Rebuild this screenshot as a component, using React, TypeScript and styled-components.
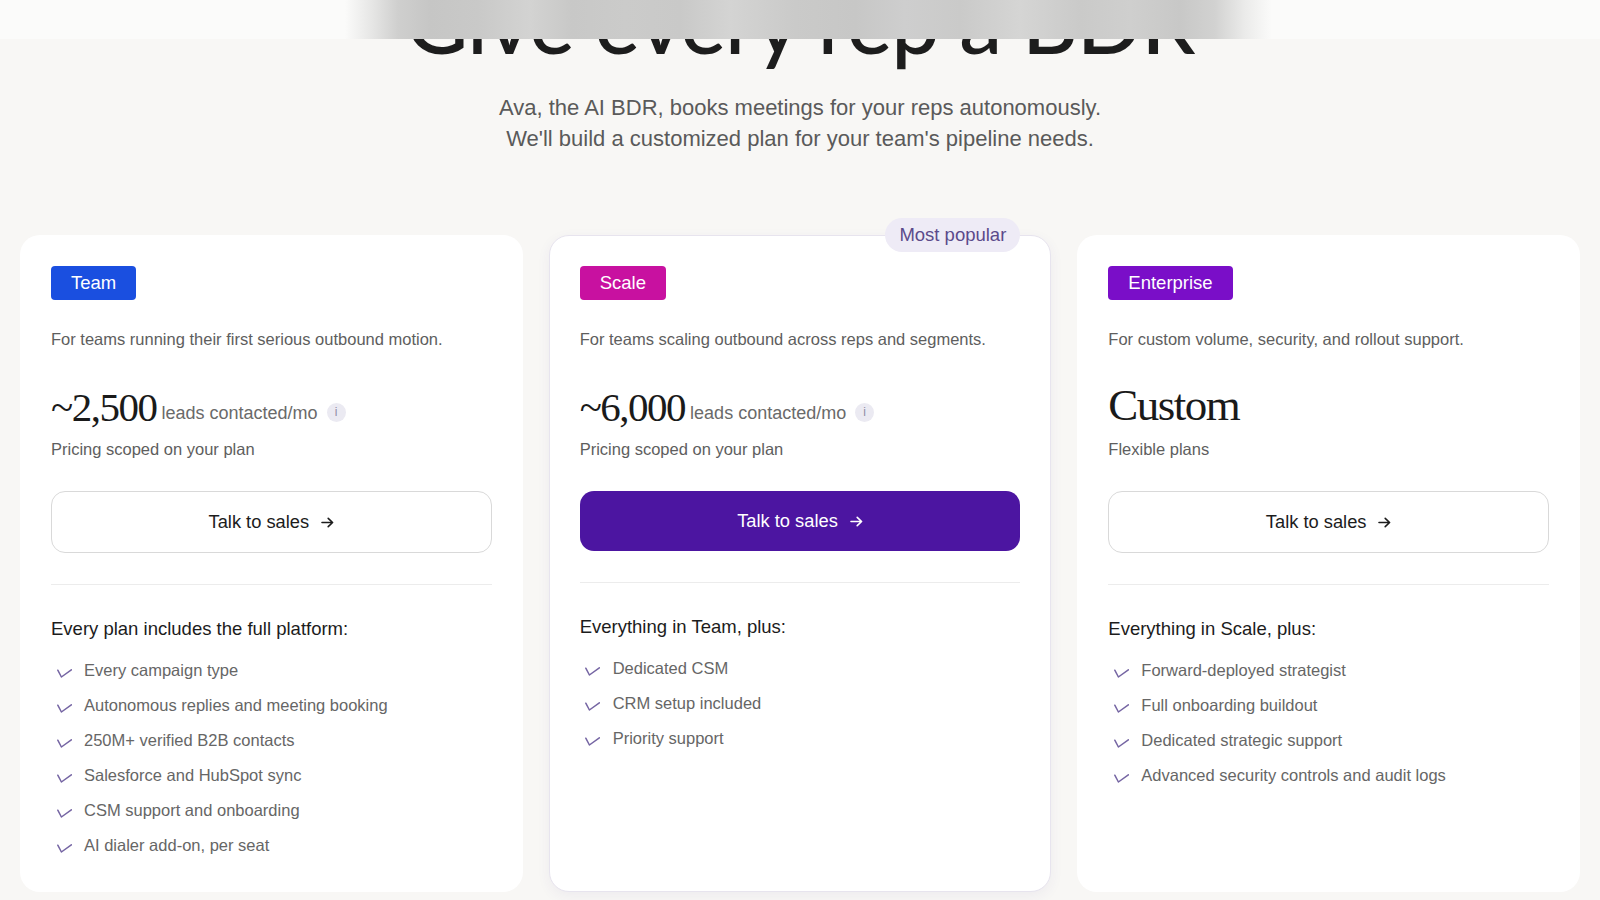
import React from "react";
import styled, { createGlobalStyle, css } from "styled-components";

const GlobalStyle = createGlobalStyle`
  * { box-sizing: border-box; }
  html, body { margin: 0; padding: 0; background: #f8f7f5; }
  body {
    font-family: "Liberation Sans", Arial, Helvetica, sans-serif;
    color: #1c1c1c;
    -webkit-font-smoothing: antialiased;
  }
`;

/* Frosted top bar lying over the scrolled-up headline: the blurred glyph
   mass is painted as a soft horizontal gradient band. */
const TopBar = styled.header`
  position: fixed;
  top: 0;
  left: 0;
  right: 0;
  height: 39px;
  z-index: 10;
  background: linear-gradient(
    90deg,
    #fbfbfa 0px,
    #fbfbfa 345px,
    #e6e6e5 372px,
    #cfcfce 398px,
    #c6c6c5 430px,
    #c9c9c8 478px,
    #d3d3d2 530px,
    #c8c8c7 572px,
    #cbcbca 625px,
    #c9c9c8 680px,
    #d4d4d3 730px,
    #cacac9 795px,
    #c7c7c6 855px,
    #cecece 905px,
    #cacac9 960px,
    #d5d5d4 1020px,
    #cacac9 1080px,
    #cfcfce 1130px,
    #c8c8c7 1180px,
    #d2d2d1 1215px,
    #ebebea 1245px,
    #fbfbfa 1272px,
    #fbfbfa 1600px
  );
`;

const Page = styled.main`
  padding: 0 20px 40px;
`;

const Hero = styled.section`
  text-align: center;
`;

const Title = styled.h1`
  margin: -22px 0 0;
  font-family: Lato, "Open Sans", sans-serif;
  font-weight: 500;
  font-size: 86px;
  line-height: 86px;
  letter-spacing: -1px;
  color: #1d1d1d;
`;

const Subtitle = styled.p`
  margin: 27.5px 0 0;
  font-size: 22px;
  line-height: 31px;
  color: #5a5a5a;
`;

const Grid = styled.div`
  margin-top: 81px;
  display: grid;
  grid-template-columns: repeat(3, 1fr);
  gap: 26px;
  align-items: stretch;
`;

const Card = styled.article<{ $featured?: boolean }>`
  position: relative;
  background: #ffffff;
  border-radius: 20px;
  padding: 31px 31px 35px;
  display: flex;
  flex-direction: column;
  ${(p) =>
    p.$featured &&
    css`
      border: 1px solid #e7e4ee;
      padding: 30px 30px 34px;
      box-shadow: 0 4px 14px rgba(70, 50, 130, 0.06);
    `}
`;

const PopularPill = styled.span`
  position: absolute;
  top: -18px;
  right: 30px;
  height: 34px;
  padding: 0 14px;
  display: inline-flex;
  align-items: center;
  border-radius: 17px;
  background: #eeebf6;
  color: #5b4a8b;
  font-size: 18.5px;
`;

const Badge = styled.span<{ $color: string }>`
  align-self: flex-start;
  display: inline-flex;
  align-items: center;
  height: 34px;
  padding: 0 20px;
  border-radius: 4px;
  background: ${(p) => p.$color};
  color: #ffffff;
  font-size: 18.5px;
`;

const Description = styled.p`
  margin: 27px 0 0;
  font-size: 16.5px;
  line-height: 24px;
  color: #5e5e5e;
`;

const PriceRow = styled.div`
  margin-top: 34.5px;
  height: 44px;
  display: flex;
  align-items: baseline;
`;

const BigNumber = styled.span<{ $custom?: boolean }>`
  font-family: "Liberation Serif", "Times New Roman", serif;
  font-size: ${(p) => (p.$custom ? "45px" : "41px")};
  line-height: ${(p) => (p.$custom ? "41px" : "44px")};
  letter-spacing: -1.5px;
  color: #1a1a1a;
`;

const Unit = styled.span`
  margin-left: 5px;
  font-size: 18px;
  color: #6a6a6a;
  transform: translateY(-2px);
`;

const InfoDot = styled.span`
  margin-left: 9px;
  width: 19px;
  height: 19px;
  border-radius: 50%;
  background: #ebeaf2;
  color: #8f8ca4;
  font-size: 12px;
  line-height: 19px;
  text-align: center;
  display: inline-block;
  transform: translateY(-5px);
`;

const Note = styled.p`
  margin: 8px 0 0;
  font-size: 16.5px;
  line-height: 24px;
  color: #5e5e5e;
`;

const SalesButton = styled.button<{ $primary?: boolean }>`
  margin-top: 30px;
  width: 100%;
  height: 62px;
  border-radius: 14px;
  border: 1.5px solid #d9d9d9;
  background: #ffffff;
  color: #1c1c1c;
  font-family: inherit;
  font-size: 18.3px;
  display: flex;
  align-items: center;
  justify-content: center;
  gap: 12px;
  cursor: pointer;
  ${(p) =>
    p.$primary &&
    css`
      height: 60px;
      border: none;
      background: #4c15a1;
      color: #ffffff;
    `}
`;

const Divider = styled.hr`
  margin: 31px 0 0;
  border: none;
  height: 1px;
  background: #ececec;
`;

const FeatureTitle = styled.h3`
  margin: 31px 0 0;
  font-weight: 400;
  font-size: 18.5px;
  line-height: 26px;
  color: #1c1c1c;
`;

const FeatureList = styled.ul`
  list-style: none;
  margin: 16px 0 0;
  padding: 0;
  display: flex;
  flex-direction: column;
  gap: 11px;
`;

const FeatureItem = styled.li`
  display: flex;
  align-items: flex-start;
  gap: 12.5px;
  padding-left: 5.5px;
  font-size: 16.5px;
  line-height: 24px;
  color: #666666;
`;

const CheckSvg = styled.svg`
  flex: none;
  margin-top: 11px;
`;

const Check = () => (
  <CheckSvg width="15" height="9" viewBox="0 0 15 9" fill="none">
    <path
      d="M0.8 1.2 L4.4 8 L14.3 0.8"
      stroke="#7565a3"
      strokeWidth="1.5"
      strokeLinecap="round"
      strokeLinejoin="round"
    />
  </CheckSvg>
);

const Arrow = () => (
  <svg width="13" height="11" viewBox="0 0 13 11" fill="none">
    <path
      d="M1 5.5 H11.5 M7.2 1.3 L11.6 5.5 L7.2 9.7"
      stroke="currentColor"
      strokeWidth="1.6"
      strokeLinecap="round"
      strokeLinejoin="round"
    />
  </svg>
);

type Plan = {
  name: string;
  color: string;
  description: string;
  amount: string;
  custom?: boolean;
  note: string;
  featured?: boolean;
  featuresTitle: string;
  features: string[];
};

const plans: Plan[] = [
  {
    name: "Team",
    color: "#1a4fe0",
    description: "For teams running their first serious outbound motion.",
    amount: "~2,500",
    note: "Pricing scoped on your plan",
    featuresTitle: "Every plan includes the full platform:",
    features: [
      "Every campaign type",
      "Autonomous replies and meeting booking",
      "250M+ verified B2B contacts",
      "Salesforce and HubSpot sync",
      "CSM support and onboarding",
      "AI dialer add-on, per seat",
    ],
  },
  {
    name: "Scale",
    color: "#c811a0",
    description: "For teams scaling outbound across reps and segments.",
    amount: "~6,000",
    note: "Pricing scoped on your plan",
    featured: true,
    featuresTitle: "Everything in Team, plus:",
    features: ["Dedicated CSM", "CRM setup included", "Priority support"],
  },
  {
    name: "Enterprise",
    color: "#7a0ec8",
    description: "For custom volume, security, and rollout support.",
    amount: "Custom",
    custom: true,
    note: "Flexible plans",
    featuresTitle: "Everything in Scale, plus:",
    features: [
      "Forward-deployed strategist",
      "Full onboarding buildout",
      "Dedicated strategic support",
      "Advanced security controls and audit logs",
    ],
  },
];

export default function App() {
  return (
    <>
      <GlobalStyle />
      <TopBar />
      <Page>
        <Hero>
          <Title>Give every rep a BDR</Title>
          <Subtitle>
            Ava, the AI BDR, books meetings for your reps autonomously.
            <br />
            We'll build a customized plan for your team's pipeline needs.
          </Subtitle>
        </Hero>
        <Grid>
          {plans.map((plan) => (
            <Card key={plan.name} $featured={plan.featured}>
              {plan.featured && <PopularPill>Most popular</PopularPill>}
              <Badge $color={plan.color}>{plan.name}</Badge>
              <Description>{plan.description}</Description>
              <PriceRow>
                <BigNumber $custom={plan.custom}>{plan.amount}</BigNumber>
                {!plan.custom && (
                  <>
                    <Unit>leads contacted/mo</Unit>
                    <InfoDot>i</InfoDot>
                  </>
                )}
              </PriceRow>
              <Note>{plan.note}</Note>
              <SalesButton $primary={plan.featured}>
                Talk to sales <Arrow />
              </SalesButton>
              <Divider />
              <FeatureTitle>{plan.featuresTitle}</FeatureTitle>
              <FeatureList>
                {plan.features.map((f) => (
                  <FeatureItem key={f}>
                    <Check />
                    <span>{f}</span>
                  </FeatureItem>
                ))}
              </FeatureList>
            </Card>
          ))}
        </Grid>
      </Page>
    </>
  );
}
